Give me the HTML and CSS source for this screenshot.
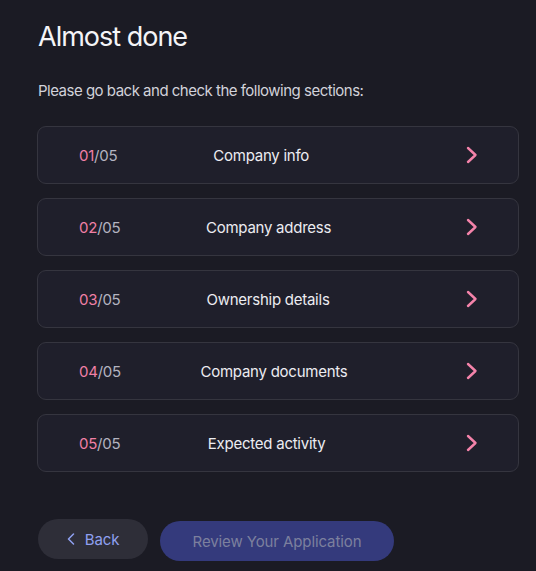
FILE: index.html
```html
<!DOCTYPE html>
<html>
<head>
<meta charset="utf-8">
<link rel="stylesheet" href="styles.css">
</head>
<body>
<main class="page">
  <h1 class="title">Almost done</h1>
  <p class="subtitle">Please go back and check the following sections:</p>
  <ul class="sections">
    <li class="card"><span class="num"><span class="cur">01</span>/05</span><span class="label">Company info</span><span class="go"><svg width="12" height="18" viewBox="0 0 12 18"><polyline points="2,2 9.5,9 2,16" fill="none" stroke="#f483aa" stroke-width="2.4" stroke-linecap="round" stroke-linejoin="round"/></svg></span></li>
    <li class="card"><span class="num"><span class="cur">02</span>/05</span><span class="label">Company address</span><span class="go"><svg width="12" height="18" viewBox="0 0 12 18"><polyline points="2,2 9.5,9 2,16" fill="none" stroke="#f483aa" stroke-width="2.4" stroke-linecap="round" stroke-linejoin="round"/></svg></span></li>
    <li class="card"><span class="num"><span class="cur">03</span>/05</span><span class="label">Ownership details</span><span class="go"><svg width="12" height="18" viewBox="0 0 12 18"><polyline points="2,2 9.5,9 2,16" fill="none" stroke="#f483aa" stroke-width="2.4" stroke-linecap="round" stroke-linejoin="round"/></svg></span></li>
    <li class="card"><span class="num"><span class="cur">04</span>/05</span><span class="label">Company documents</span><span class="go"><svg width="12" height="18" viewBox="0 0 12 18"><polyline points="2,2 9.5,9 2,16" fill="none" stroke="#f483aa" stroke-width="2.4" stroke-linecap="round" stroke-linejoin="round"/></svg></span></li>
    <li class="card"><span class="num"><span class="cur">05</span>/05</span><span class="label">Expected activity</span><span class="go"><svg width="12" height="18" viewBox="0 0 12 18"><polyline points="2,2 9.5,9 2,16" fill="none" stroke="#f483aa" stroke-width="2.4" stroke-linecap="round" stroke-linejoin="round"/></svg></span></li>
  </ul>
  <div class="actions">
    <button class="btn back"><svg width="8" height="12" viewBox="0 0 8 12"><polyline points="6.5,1 1.5,6 6.5,11" fill="none" stroke="#8fa0f0" stroke-width="1.5" stroke-linecap="round" stroke-linejoin="round"/></svg><span>Back</span></button>
    <button class="btn review">Review Your Application</button>
  </div>
</main>
</body>
</html>
```
FILE: styles.css
```css
html, body {
  margin: 0;
  padding: 0;
  background: #1b1b24;
}
body {
  font-family: Inter, "Liberation Sans", sans-serif;
  color: #e8e8ee;
}
.page {
  padding: 20px 17px 0 37px;
}
.title {
  margin: 0 0 0 1px;
  font-size: 27px;
  font-weight: 400;
  line-height: 34px;
  color: #f4f4f7;
  letter-spacing: -1px;
}
.subtitle {
  margin: 27px 0 0 1px;
  font-size: 15px;
  line-height: 20px;
  color: #d2d2da;
  letter-spacing: -0.5px;
}
.sections {
  list-style: none;
  margin: 25px 0 0 0;
  padding: 0;
  display: flex;
  flex-direction: column;
  gap: 14px;
}
.card {
  display: flex;
  align-items: center;
  height: 56px;
  padding: 0 40px 0 41px;
  background: #1f1f2b;
  border: 1px solid #35353f;
  border-radius: 9px;
  font-size: 15px;
  letter-spacing: -0.25px;
}
.num {
  flex: none;
  width: 82px;
  color: #b4b4c0;
}
.cur {
  color: #f07fa5;
}
.label {
  flex: 1 1 auto;
  text-align: center;
  color: #ececf1;
}
.go {
  flex: 1 1 auto;
  display: flex;
  justify-content: flex-end;
}
.go svg {
  display: block;
}
.actions {
  display: flex;
  align-items: flex-start;
  gap: 12px;
  margin-top: 47px;
  padding-left: 1px;
}
.btn {
  border: none;
  height: 40px;
  border-radius: 20px;
  font-family: Inter, "Liberation Sans", sans-serif;
  font-size: 15px;
  padding: 0;
  display: flex;
  align-items: center;
  justify-content: center;
  letter-spacing: -0.1px;
}
.back {
  width: 110px;
  background: #2e2e38;
  color: #8fa0f0;
  gap: 10px;
}
.back svg {
  display: block;
}
.review {
  width: 234px;
  margin-top: 2px;
  background: #343a7c;
  color: #7c809e;
}
```
